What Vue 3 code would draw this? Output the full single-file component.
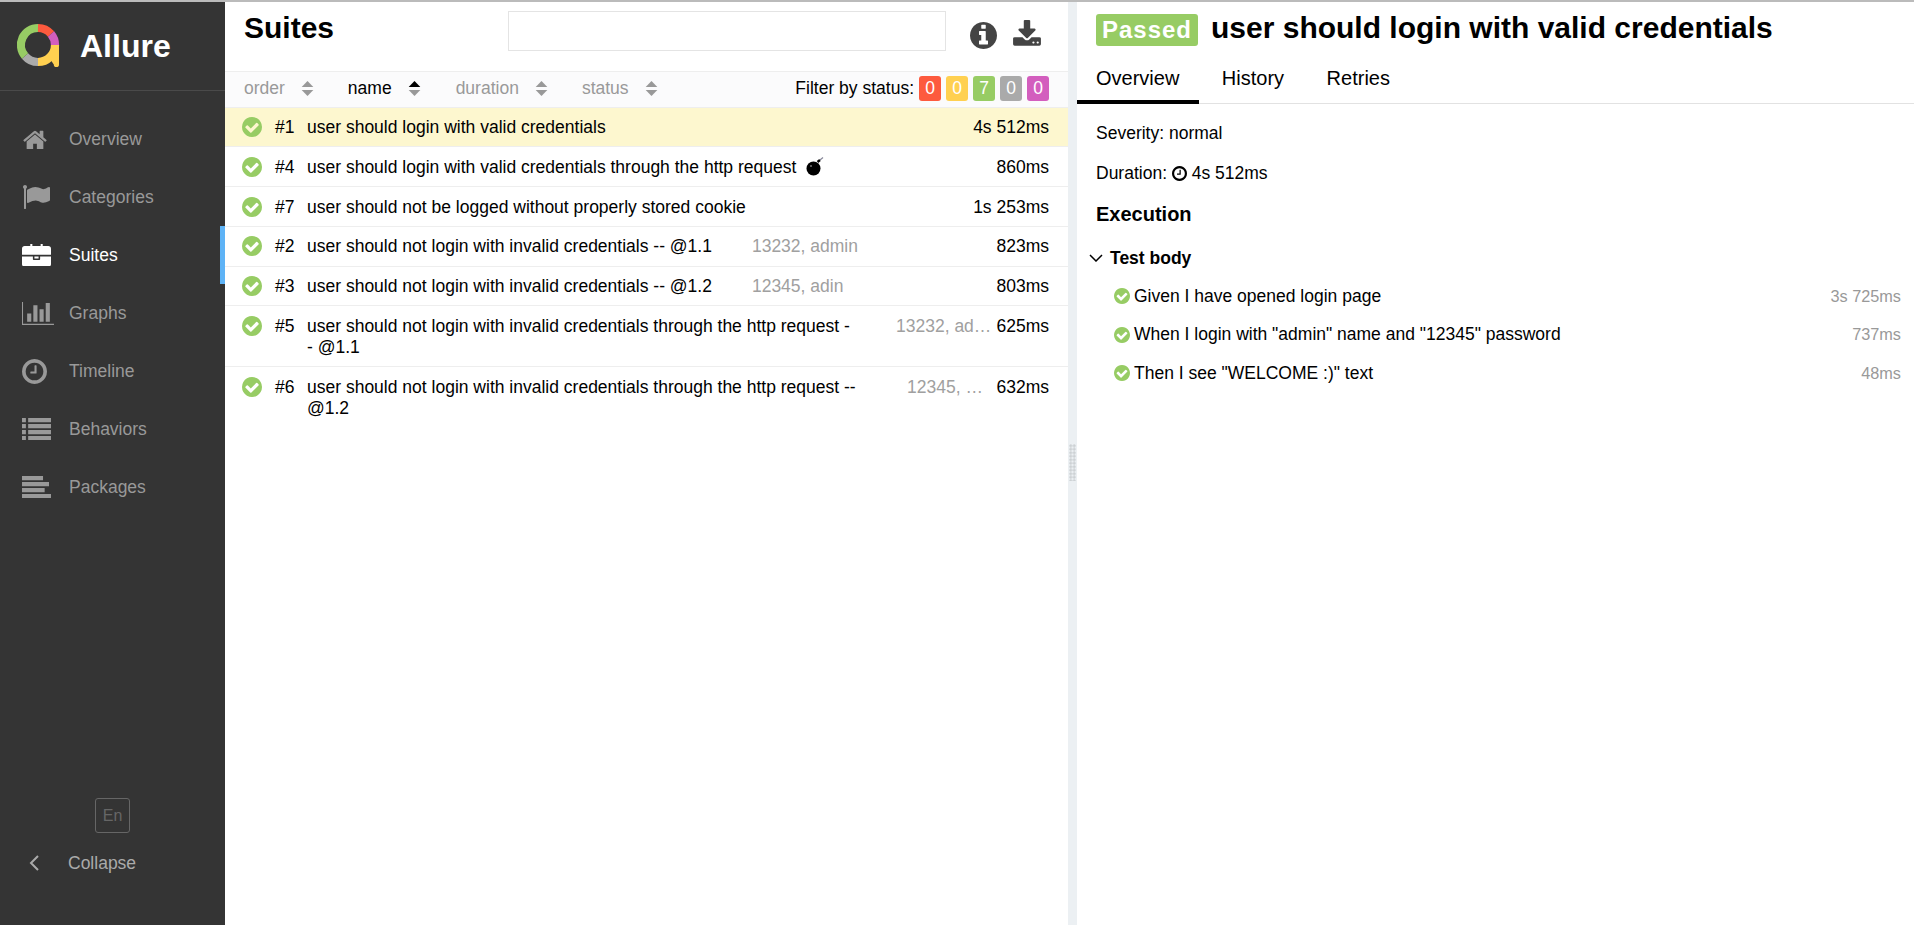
<template>
  <div class="page">
    <aside class="side">
      <div class="brand">
        <svg class="logo" viewBox="0 0 44 46" width="44" height="46">
          <g fill="none" stroke-width="8.2">
            <path d="M22 5A17 17 0 0 1 35 11" stroke="#fd5a3e" />
            <path d="M35 11A17 17 0 0 1 39 22" stroke="#d35ebe" />
            <path d="M39 22A17 17 0 0 1 22 39" stroke="#ffd050" />
            <path d="M22 39A17 17 0 0 1 9 33" stroke="#aaa" />
            <path d="M9 33A17 17 0 0 1 22 5" stroke="#97cc64" />
          </g>
          <path d="M35 22h8v19.500a2.600 2.600 0 0 1-5.200 0l-2.800-4z" fill="#ffd050" />
        </svg>
        <span class="brand-name">Allure</span>
      </div>
      <nav class="nav">
        <a v-for="item in navItems" :key="item.label" :class="['nav-item', { active: item.label === 'Suites' }]">
          <span class="nav-icon">
            <svg :viewBox="item.box" :width="item.width" fill="currentColor"><path :d="item.d" /></svg>
          </span>
          <span>{{ item.label }}</span>
        </a>
      </nav>
      <div class="side-bottom">
        <button class="lang">En</button>
        <div class="collapse">
          <svg class="collapse-icon" viewBox="0 0 12 18" width="12" height="18">
            <path d="M10 2L3 9l7 7" fill="none" stroke="currentColor" stroke-width="2" />
          </svg>
          <span>Collapse</span>
        </div>
      </div>
    </aside>

    <section class="suites">
      <header class="suites-head">
        <h1>Suites</h1>
        <input class="search" />
        <div class="head-icons">
          <svg viewBox="128 128 1536 1536" width="27" height="27" fill="#444"><path :d="icons.info" /></svg>
          <svg viewBox="0 0 1792 1792" width="30" height="30" fill="#444"><path :d="icons.download" /></svg>
        </div>
      </header>
      <div class="sorter">
        <div v-for="col in sortCols" :key="col.label" :class="['sort-col', col.cls]">
          <span>{{ col.label }}</span>
          <svg class="carets" viewBox="0 0 12 16" width="13" height="17">
            <path d="M6 1l5.500 5.500H.5z" :fill="col.label === 'name' ? '#000' : '#999'" />
            <path d="M6 15L.5 9.500h11z" fill="#999" />
          </svg>
        </div>
        <div class="filter">
          <span class="filter-label">Filter by status:</span>
          <span v-for="b in badges" :key="b.color" class="badge" :class="b.color">{{ b.n }}</span>
        </div>
      </div>
      <div class="rows">
        <div v-for="row in rows" :key="row.id" :class="['row', { picked: row.id === 1 }]">
          <svg class="check" viewBox="128 128 1536 1536" width="20" height="20"><path :d="icons.check" /></svg>
          <span class="order">#{{ row.id }}</span>
          <span :class="['name', row.nameCls]">{{ row.name }}</span>
          <svg v-if="row.bomb" class="bomb" viewBox="0 0 20 20" width="20" height="20">
            <circle cx="8.500" cy="11.500" r="7" fill="#000" />
            <path d="M12.500 5l2.500-2" stroke="#000" stroke-width="2.500" fill="none" />
            <path d="M15 3l3-2.500" stroke="#889" stroke-width="1.200" fill="none" />
            <circle cx="6" cy="9" r="1" fill="#777" />
          </svg>
          <span v-if="row.params" :class="['params', row.paramsCls]">{{ row.params }}</span>
          <span class="time">{{ row.time }}</span>
        </div>
      </div>
    </section>

    <div class="gutter"><span class="grip"></span></div>

    <section class="detail">
      <div class="detail-head">
        <span class="passed">Passed</span>
        <h2>user should login with valid credentials</h2>
      </div>
      <div class="tabs">
        <a class="tab active">Overview</a>
        <a class="tab">History</a>
        <a class="tab">Retries</a>
      </div>
      <div class="info">
        <div class="info-line">Severity: normal</div>
        <div class="info-line">
          Duration:
          <svg class="clock" viewBox="128 128 1536 1536" width="15" height="15" fill="#000"><path :d="icons.clock" /></svg>
          4s 512ms
        </div>
      </div>
      <h3>Execution</h3>
      <div class="stage">
        <svg viewBox="0 0 14 8" width="14" height="8"><path d="M1 1l6 6 6-6" fill="none" stroke="#000" stroke-width="1.500" /></svg>
        <span>Test body</span>
      </div>
      <div v-for="step in steps" :key="step.text" class="step">
        <svg viewBox="128 128 1536 1536" width="16" height="16"><path :d="icons.check" /></svg>
        <span class="step-text">{{ step.text }}</span>
        <span class="step-time">{{ step.time }}</span>
      </div>
    </section>
  </div>
</template>

<script setup>
const icons = {
  check: 'M1412 734q0-28-18-46l-91-90q-19-19-45-19t-45 19l-408 407-226-226q-19-19-45-19t-45 19l-91 90q-18 18-18 46 0 27 18 45l362 362q19 19 45 19 27 0 46-19l543-543q18-18 18-45zm252 162q0 209-103 385.500t-279.500 279.500-385.500 103-385.500-103-279.500-279.500-103-385.500 103-385.500 279.500-279.500 385.500-103 385.500 103 279.500 279.500 103 385.500z',
  info: 'M1152 1376v-160q0-14-9-23t-23-9h-96v-512q0-14-9-23t-23-9h-320q-14 0-23 9t-9 23v160q0 14 9 23t23 9h96v320h-96q-14 0-23 9t-9 23v160q0 14 9 23t23 9h448q14 0 23-9t9-23zm-128-896v-160q0-14-9-23t-23-9h-192q-14 0-23 9t-9 23v160q0 14 9 23t23 9h192q14 0 23-9t9-23zm640 416q0 209-103 385.500t-279.500 279.500-385.500 103-385.500-103-279.500-279.500-103-385.500 103-385.500 279.500-279.500 385.500-103 385.500 103 279.500 279.500 103 385.500z',
  download: 'M1344 1344q0-26-19-45t-45-19-45 19-19 45 19 45 45 19 45-19 19-45zm256 0q0-26-19-45t-45-19-45 19-19 45 19 45 45 19 45-19 19-45zm128-224v320q0 40-28 68t-68 28h-1472q-40 0-68-28t-28-68v-320q0-40 28-68t68-28h465l135 136q58 56 136 56t136-56l136-136h464q40 0 68 28t28 68zm-325-569q17 41-14 70l-448 448q-18 19-45 19t-45-19l-448-448q-31-29-14-70 17-39 59-39h256v-448q0-26 19-45t45-19h256q26 0 45 19t19 45v448h256q42 0 59 39z',
  clock: 'M1024 544v448q0 14-9 23t-23 9h-320q-14 0-23-9t-9-23v-64q0-14 9-23t23-9h224v-352q0-14 9-23t23-9h64q14 0 23 9t9 23zm416 352q0-148-73-273t-198-198-273-73-273 73-198 198-73 273 73 273 198 198 273 73 273-73 198-198 73-273zm224 0q0 209-103 385.500t-279.500 279.500-385.500 103-385.500-103-279.500-279.500-103-385.500 103-385.500 279.500-279.500 385.500-103 385.500 103 279.500 279.500 103 385.500z'
}

const navItems = [
  { label: 'Overview', box: '0 128 1792 1408', width: 26, d: 'M1472 992v480q0 26-19 45t-45 19h-384v-384h-256v384h-384q-26 0-45-19t-19-45v-480q0-1 .5-3t.5-3l575-474 575 474q1 2 1 6zm223-69l-62 74q-8 9-21 11h-3q-13 0-21-7l-692-577-692 577q-12 8-24 7-13-2-21-11l-62-74q-8-10-7-23.500t11-21.500l719-599q32-26 76-26t76 26l244 204v-195q0-14 9-23t23-9h192q14 0 23 9t9 23v408l219 182q10 8 11 21.500t-7 23.500z' },
  { label: 'Categories', box: '0 128 1792 1536', width: 28, d: 'M320 256q0 72-64 110v1266q0 13-9.500 22.500t-22.500 9.500h-64q-13 0-22.500-9.500t-9.500-22.500v-1266q-64-38-64-110 0-53 37.500-90.500t90.500-37.500 90.500 37.500 37.500 90.500zm1472 64v763q0 25-12.500 38.500t-39.500 27.500q-215 116-369 116-61 0-123.500-22t-108.500-48-115.500-48-142.500-22q-192 0-464 146-17 9-33 9-26 0-45-19t-19-45v-742q0-32 31-55 21-14 79-43 236-120 421-120 107 0 200 29t219 88q38 19 88 19 54 0 117.500-21t110-47 88-47 54.500-21q26 0 45 19t19 45z' },
  { label: 'Suites', box: '0 128 1792 1408', width: 29, d: 'M640 256h512v-128h-512v128zm1152 640v480q0 66-47 113t-113 47h-1472q-66 0-113-47t-47-113v-480h672v160q0 26 19 45t45 19h320q26 0 45-19t19-45v-160h672zm-768 0v128h-256v-128h256zm768-480v384h-1792v-384q0-66 47-113t113-47h352v-160q0-40 28-68t68-28h576q40 0 68 28t28 68v160h352q66 0 113 47t47 113z' },
  { label: 'Graphs', box: '0 128 2048 1536', width: 33, d: 'M576 896v512h-256v-512h256zm384-512v1024h-256v-1024h256zm1024 1152v128h-2048v-1472h128v1344h1920zm-640-896v768h-256v-768h256zm384-384v1152h-256v-1152h256z' },
  { label: 'Timeline', box: '128 128 1536 1536', width: 25, d: icons.clock },
  { label: 'Behaviors', box: '0 0 1792 1370', width: 29, d: 'M0 0h240v260H0zM380 0h1412v260H380zM0 370h240v260H0zM380 370h1412v260H380zM0 740h240v260H0zM380 740h1412v260H380zM0 1110h240v260H0zM380 1110h1412v260H380z' },
  { label: 'Packages', box: '0 0 1792 1370', width: 29, d: 'M0 0h1300v260H0zM0 370h1670v260H0zM0 740h1400v260H0zM0 1110h1792v260H0z' }
]

const sortCols = [
  { label: 'order', cls: 'c-order' },
  { label: 'name', cls: 'c-name' },
  { label: 'duration', cls: 'c-duration' },
  { label: 'status', cls: 'c-status' }
]

const badges = [
  { n: 0, color: 'red' },
  { n: 0, color: 'yellow' },
  { n: 7, color: 'green' },
  { n: 0, color: 'gray' },
  { n: 0, color: 'purple' }
]

const rows = [
  { id: 1, name: 'user should login with valid credentials', time: '4s 512ms' },
  { id: 4, name: 'user should login with valid credentials through the http request', time: '860ms', bomb: true },
  { id: 7, name: 'user should not be logged without properly stored cookie', time: '1s 253ms' },
  { id: 2, name: 'user should not login with invalid credentials -- @1.1', params: '13232, admin', time: '823ms' },
  { id: 3, name: 'user should not login with invalid credentials -- @1.2', params: '12345, adin', time: '803ms' },
  { id: 5, name: 'user should not login with invalid credentials through the http request -- @1.1', nameCls: 'name-a', params: '13232, admin', paramsCls: 'params-a', time: '625ms' },
  { id: 6, name: 'user should not login with invalid credentials through the http request -- @1.2', nameCls: 'name-b', params: '12345, adin', paramsCls: 'params-b', time: '632ms' }
]

const steps = [
  { text: 'Given I have opened login page', time: '3s 725ms' },
  { text: 'When I login with "admin" name and "12345" password', time: '737ms' },
  { text: 'Then I see "WELCOME :)" text', time: '48ms' }
]
</script>

<style>
html, body {
  margin: 0;
  height: 100%;
  overflow: hidden;
}
</style>

<style scoped>
.page {
  display: flex;
  height: 925px;
  box-sizing: border-box;
  border-top: 2px solid #bbb;
  font-family: "Liberation Sans", Arial, sans-serif;
  font-size: 17.500px;
  color: #000;
  background: #fff;
}

/* sidebar */
.side {
  width: 225px;
  flex: none;
  display: flex;
  flex-direction: column;
  background: #343434;
  color: #999;
}
.brand {
  height: 89px;
  box-sizing: border-box;
  border-bottom: 1px solid #4a4a4a;
  display: flex;
  align-items: center;
  padding-left: 16px;
}
.logo {
  margin-right: 20px;
}
.brand-name {
  font-size: 32px;
  font-weight: 700;
  color: #fff;
}
.nav {
  padding-top: 19px;
  flex: 1;
}
.nav-item {
  display: flex;
  align-items: center;
  height: 58px;
  box-sizing: border-box;
  padding-left: 22px;
}
.nav-icon {
  width: 47px;
  display: flex;
  align-items: center;
}
.nav-icon svg {
  display: block;
}
.nav-item.active {
  color: #fff;
  border-right: 5px solid #5eb3f6;
}
.side-bottom {
  display: flex;
  flex-direction: column;
  padding-bottom: 43px;
}
.lang {
  align-self: flex-start;
  margin-left: 95px;
  width: 35px;
  height: 35px;
  padding: 0;
  border: 1px solid #666;
  border-radius: 3px;
  background: none;
  color: #666;
  font: 16px "Liberation Sans", Arial, sans-serif;
}
.collapse {
  display: flex;
  align-items: center;
  height: 38px;
  margin-top: 11px;
  padding-left: 28px;
  font-size: 17.500px;
  color: #aaa;
}
.collapse-icon {
  margin-right: 28px;
}

/* suites pane */
.suites {
  width: 843px;
  flex: none;
}
.suites-head {
  display: flex;
  height: 69px;
  box-sizing: border-box;
  padding: 9px 0 0 19px;
}
h1 {
  margin: -1px 0 0;
  width: 264px;
  font-size: 30px;
  line-height: 36px;
  font-weight: 700;
}
.search {
  width: 438px;
  height: 40px;
  box-sizing: border-box;
  border: 1px solid #e4e4e4;
  background: #fff;
}
.head-icons {
  display: flex;
  align-items: center;
  height: 40px;
  margin-left: 24px;
  gap: 15px;
  padding-top: 4px;
}
.sorter {
  display: flex;
  align-items: center;
  height: 36.500px;
  box-sizing: border-box;
  border-top: 1px solid #eee;
  border-bottom: 1px solid #eee;
  background: #fbfbfc;
  color: #999;
  padding: 0 19px 2px;
}
.sort-col {
  display: flex;
  align-items: center;
}
.carets {
  margin-left: 16px;
}
.c-name {
  color: #000;
  margin-left: 34px;
}
.c-duration {
  margin-left: 35px;
}
.c-status {
  margin-left: 34px;
}
.filter {
  margin-left: auto;
  display: flex;
  align-items: center;
  color: #000;
}
.filter-label {
  margin-right: 5px;
}
.badge {
  width: 22px;
  height: 25px;
  margin-left: 5px;
  border-radius: 3px;
  color: #fff;
  text-align: center;
  line-height: 25px;
}
.filter-label + .badge {
  margin-left: 0;
}
.red { background: #fd5a3e; }
.yellow { background: #ffd050; }
.green { background: #97cc64; }
.gray { background: #aaa; }
.purple { background: #d35ebe; }

.row {
  display: flex;
  align-items: flex-start;
  box-sizing: border-box;
  padding: 9.500px 19px 8.250px 17px;
  line-height: 21px;
  border-bottom: 1px solid #eee;
}
.row:last-child {
  border-bottom: 0;
}
.row.picked {
  background: #fdf7cf;
}
.check {
  flex: none;
  fill: #97cc64;
}
.order {
  flex: none;
  width: 32px;
  margin-left: 13px;
}
.name {
  flex: 0 1 auto;
}
.name-a,
.name-b {
  flex: none;
  line-height: 21.600px;
  margin-bottom: -1.200px;
}
.name-a {
  width: 547px;
}
.name-b {
  width: 560px;
}
.bomb {
  margin-left: 9px;
  flex: none;
}
.params {
  margin-left: 40px;
  color: #a0a0a0;
  white-space: nowrap;
  overflow: hidden;
  text-overflow: ellipsis;
}
.params-a {
  flex: none;
  width: 99px;
  margin-left: 42px;
}
.params-b {
  flex: none;
  width: 76px;
}
.time {
  margin-left: auto;
  flex: none;
}

.gutter {
  width: 9px;
  flex: none;
  background: #ecf0f3;
  display: flex;
  align-items: center;
  justify-content: center;
  padding-bottom: 3px;
  box-sizing: border-box;
}
.grip {
  width: 7px;
  height: 37px;
  background-image: radial-gradient(circle, #cdd1d4 1.300px, transparent 1.500px);
  background-size: 3.500px 3.500px;
}

/* test details */
.detail {
  flex: 1;
  min-width: 0;
}
.detail-head {
  display: flex;
  align-items: center;
  height: 55px;
  padding: 0 0 0 19px;
}
.passed {
  width: 102px;
  height: 32px;
  box-sizing: border-box;
  border-radius: 3px;
  background: #97cc64;
  color: #fff;
  font-size: 24px;
  font-weight: 700;
  letter-spacing: 1px;
  line-height: 32px;
  text-align: center;
}
h2 {
  margin: 0 0 4px 13px;
  font-size: 30px;
  font-weight: 700;
}
.tabs {
  display: flex;
  height: 47px;
  box-sizing: border-box;
  border-bottom: 1px solid #e2e2e2;
  font-size: 20px;
  gap: 3.500px;
}
.tab {
  padding: 0 20px 0 19px;
  height: 47px;
  box-sizing: border-box;
  line-height: 42px;
}
.tab.active {
  border-bottom: 4px solid #000;
}
.info {
  padding: 9px 19px 0;
}
.info-line {
  height: 40px;
  line-height: 40px;
}
.clock {
  vertical-align: -2px;
}
h3 {
  margin: 6px 0 0;
  padding: 0 19px;
  height: 42px;
  font-size: 20px;
  line-height: 30px;
  font-weight: 700;
}
.stage {
  display: flex;
  align-items: center;
  height: 34px;
  margin-bottom: 2px;
  padding-left: 12px;
  font-weight: 700;
}
.stage svg {
  margin-right: 7px;
}
.step {
  display: flex;
  align-items: center;
  height: 38.500px;
  padding: 0 13px 0 37px;
}
.step svg {
  flex: none;
  fill: #97cc64;
}
.step-text {
  margin-left: 4px;
}
.step-time {
  margin-left: auto;
  color: #999;
  font-size: 16.250px;
}
</style>
